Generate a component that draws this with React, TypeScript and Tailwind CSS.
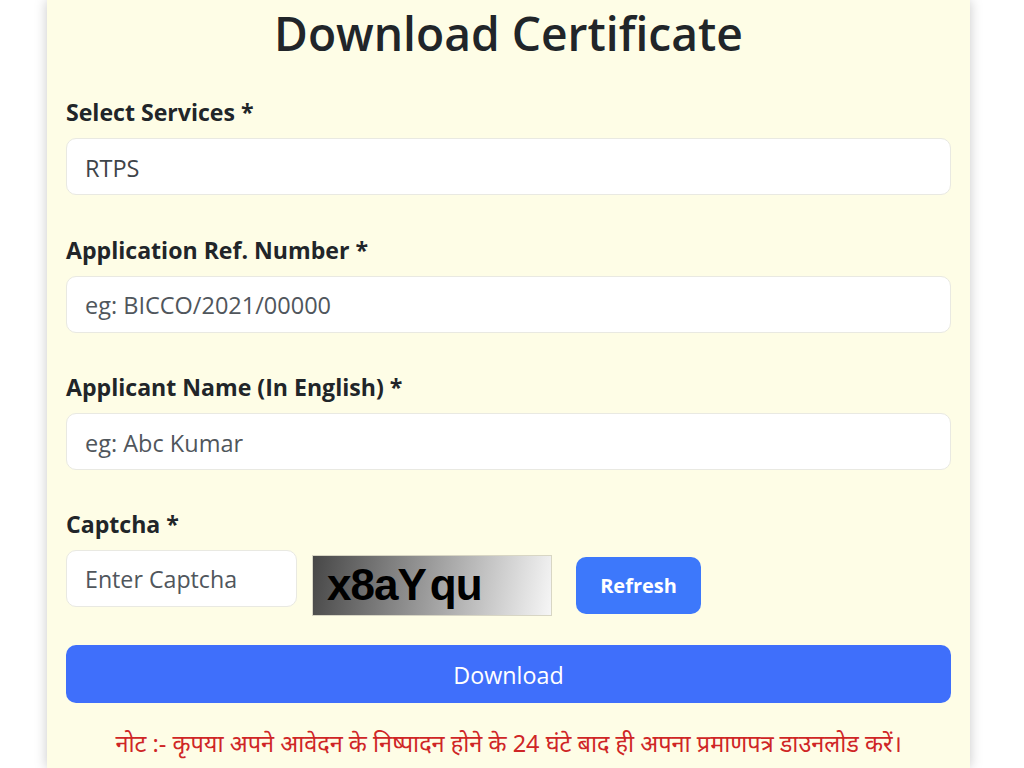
const fields = [
  { label: 'Select Services *', value: 'RTPS', muted: false },
  { label: 'Application Ref. Number *', value: 'eg: BICCO/2021/00000', muted: true },
  { label: 'Applicant Name (In English) *', value: 'eg: Abc Kumar', muted: true },
]

const fontStack = "font-['Open_Sans','Noto_Sans',sans-serif]"

export default function App() {
  return (
    <div className={`h-[768px] overflow-hidden bg-white ${fontStack}`}>
      <div className="mx-[47px] h-[768px] w-[923px] bg-[#fefde6] px-[19px] shadow-[0_0_12px_rgba(0,0,0,0.22)]">
        <h1 className="h-[68px] text-center text-[46.2px] font-semibold leading-[68px] text-[#212529]">
          Download Certificate
        </h1>

        {fields.map((field) => (
          <div key={field.label} className="h-[137.5px] pt-[27px]">
            <label className="block h-[43px] text-[23.1px] font-bold leading-[34px] text-[#212529]">{field.label}</label>
            <input
              readOnly
              placeholder={field.muted ? field.value : undefined}
              value={field.muted ? undefined : field.value}
              className="block h-[57px] w-full rounded-[10px] border border-[#e9e9e2] bg-white px-[18px] pt-[2px] text-[23.5px] text-[#3f4449] placeholder:text-[#50565c] outline-none"
            />
          </div>
        ))}

        <div className="pt-[27px]">
          <label className="block h-[42px] text-[23.1px] font-bold leading-[33px] text-[#212529]">Captcha *</label>
          <div className="flex items-start">
            <input
              readOnly
              placeholder="Enter Captcha"
              className="block h-[57px] w-[231px] rounded-[10px] border border-[#e9e9e2] bg-white px-[18px] pt-[2px] text-[23.2px] placeholder:text-[#50565c] outline-none"
            />
            <div className="ml-[15px] mt-[5px] flex h-[61px] w-[240px] items-center border border-[#d8d6c4] bg-[linear-gradient(100deg,#474747,#f6f6f6)] pl-[14px] font-['Liberation_Sans',sans-serif] text-[44px] font-bold tracking-[-1px] text-black">
              x8aY<span className="ml-[4px]">qu</span>
            </div>
            <button className="ml-[24px] mt-[7px] h-[57px] w-[125px] rounded-[10px] bg-[#3d78fb] pt-[2px] text-[20px] font-bold text-white">
              Refresh
            </button>
          </div>
        </div>

        <button className="mt-[29px] block h-[58px] w-full rounded-[10px] bg-[#3f6ffb] pt-[4px] text-[23.3px] text-white">
          Download
        </button>

        <p className="mt-[23px] text-center font-['Noto_Sans','Liberation_Serif',serif] text-[23.5px] leading-[34px] text-[#cf2626]">
          नोट :- कृपया अपने आवेदन के निष्पादन होने के 24 घंटे बाद ही अपना प्रमाणपत्र डाउनलोड करें।
        </p>
      </div>
    </div>
  )
}
